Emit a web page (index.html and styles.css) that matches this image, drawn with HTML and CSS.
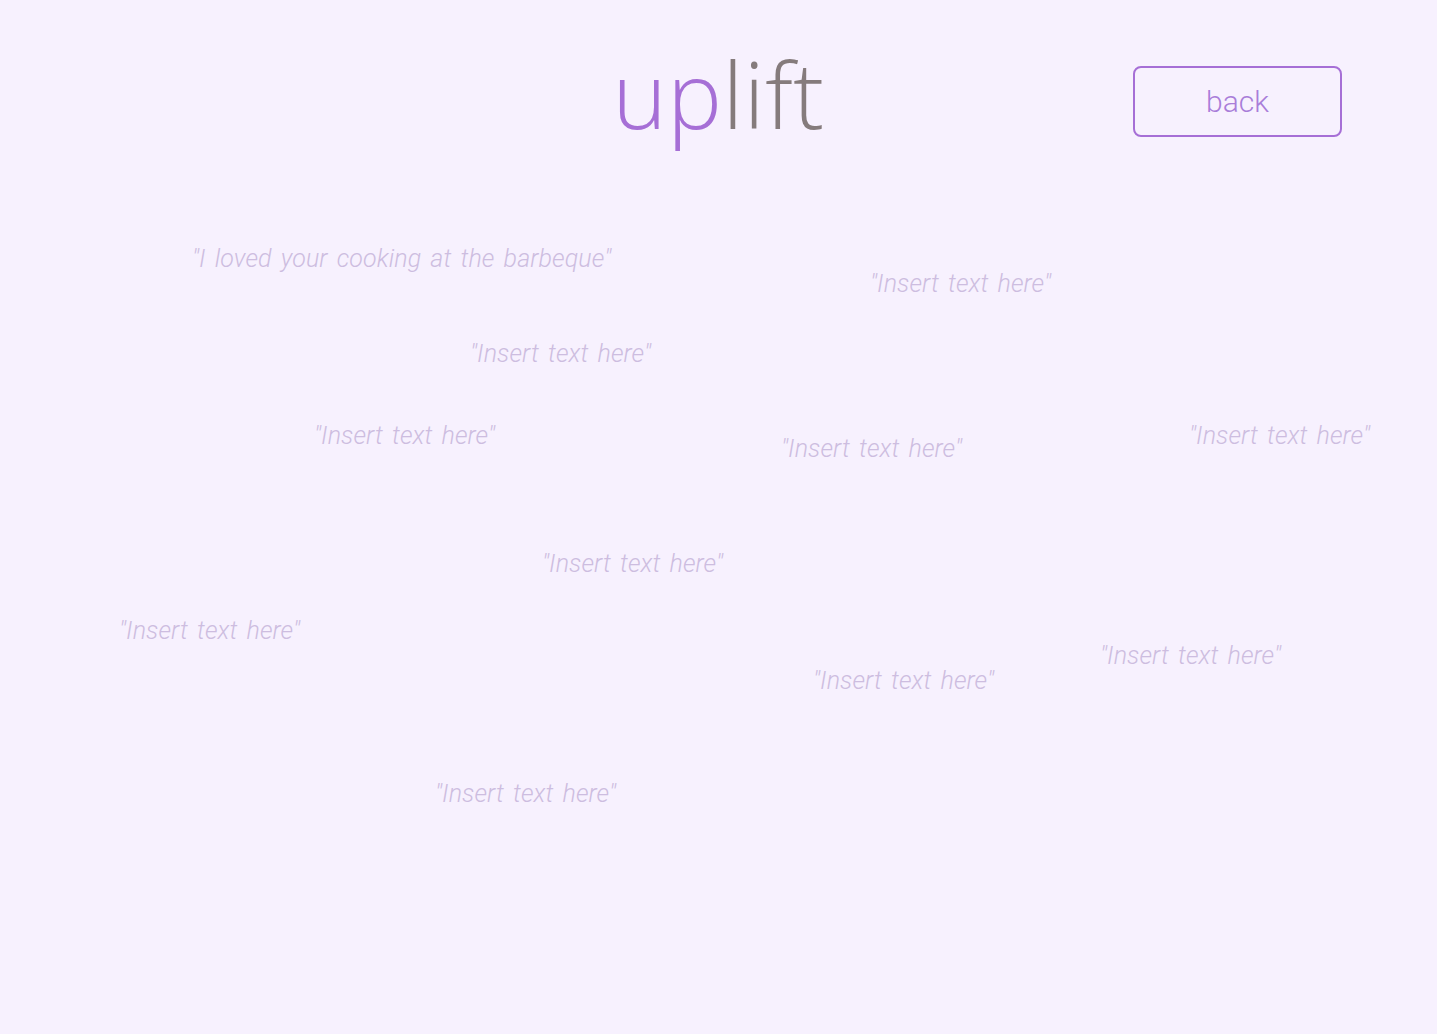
FILE: index.html
```html
<!DOCTYPE html>
<html lang="en">
<head>
<meta charset="utf-8">
<title>uplift</title>
<link rel="stylesheet" href="styles.css">
</head>
<body>
<header class="header">
  <div class="spacer"></div>
  <h1 class="logo"><span class="logo-up">up</span><span class="logo-lift">lift</span></h1>
  <div class="actions"><button class="back-btn" type="button">back</button></div>
</header>
<main class="board">
  <p class="note" style="left:192px;top:244px">"I loved your cooking at the barbeque"</p>
  <p class="note" style="left:870px;top:269px">"Insert text here"</p>
  <p class="note" style="left:470px;top:339px">"Insert text here"</p>
  <p class="note" style="left:314px;top:421px">"Insert text here"</p>
  <p class="note" style="left:781px;top:434px">"Insert text here"</p>
  <p class="note" style="left:1189px;top:421px">"Insert text here"</p>
  <p class="note" style="left:542px;top:549px">"Insert text here"</p>
  <p class="note" style="left:119px;top:616px">"Insert text here"</p>
  <p class="note" style="left:1100px;top:641px">"Insert text here"</p>
  <p class="note" style="left:813px;top:666px">"Insert text here"</p>
  <p class="note" style="left:435px;top:779px">"Insert text here"</p>
</main>
</body>
</html>
```

FILE: styles.css
```css
html, body {
  margin: 0;
  padding: 0;
  height: 100%;
}
body {
  background: #f7f1fe;
  font-family: "Open Sans", "Liberation Sans", sans-serif;
  overflow: hidden;
}
.header {
  display: grid;
  grid-template-columns: 1fr auto 1fr;
  align-items: start;
  padding-top: 34px;
}
.logo {
  margin: 0;
  font-family: "Open Sans", sans-serif;
  font-weight: 300;
  font-size: 92px;
  line-height: 120px;
  letter-spacing: 0.5px;
}
.logo-up { color: #a66fd6; }
.logo-lift { color: #857b7c; }
.actions {
  display: flex;
  justify-content: flex-end;
  padding-right: 95px;
  padding-top: 32px;
}
.back-btn {
  box-sizing: border-box;
  width: 209px;
  height: 71px;
  border: 2px solid #a66fd6;
  border-radius: 8px;
  background: transparent;
  color: #a97dd9;
  font-family: "Roboto", "Liberation Sans", sans-serif;
  font-weight: 300;
  font-size: 30px;
  padding: 0;
}
.board {
  position: absolute;
  inset: 0;
  pointer-events: none;
}
.note {
  position: absolute;
  margin: 0;
  font-family: "Roboto", "Liberation Sans", sans-serif;
  font-style: italic;
  font-weight: 300;
  font-size: 25px;
  line-height: 30px;
  letter-spacing: 0.1px;
  word-spacing: 3px;
  color: #cdbde0;
  white-space: nowrap;
}
```
